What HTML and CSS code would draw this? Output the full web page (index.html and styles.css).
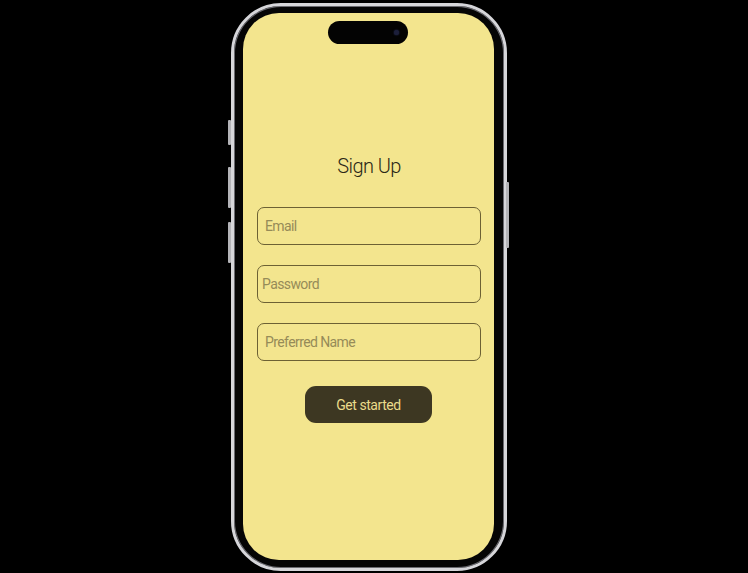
FILE: index.html
```html
<!DOCTYPE html>
<html lang="en">
<head>
<meta charset="utf-8">
<title>Sign Up</title>
<link rel="stylesheet" href="styles.css">
</head>
<body>
<div class="stage">
  <div class="phone">
    <span class="side-btn btn-action"></span>
    <span class="side-btn btn-vol-up"></span>
    <span class="side-btn btn-vol-down"></span>
    <span class="side-btn btn-power"></span>
    <div class="screen">
      <div class="island"><span class="camera"></span></div>
      <h1 class="title">Sign Up</h1>
      <form class="form">
        <input class="field" type="email" placeholder="Email">
        <input class="field field-tight" type="password" placeholder="Password">
        <input class="field" type="text" placeholder="Preferred Name">
        <button class="cta" type="button">Get started</button>
      </form>
    </div>
  </div>
</div>
</body>
</html>
```
FILE: styles.css
```css
html, body {
  margin: 0;
  padding: 0;
  background: #000;
  height: 100%;
}
body {
  font-family: Roboto, "Liberation Sans", Arial, sans-serif;
}
.stage {
  padding: 3px 0 0 231px;
}
.phone {
  position: relative;
  width: 276px;
  height: 568px;
  box-sizing: border-box;
  border: 3px solid #d6d6da;
  border-radius: 50px;
  background: #050505;
  padding: 7px 10px 8px 9px;
  box-shadow: inset 0 0 0 1px #6a6a70;
}
.side-btn {
  position: absolute;
  width: 3px;
  background: #b4b4b8;
  border-radius: 1px;
}
.btn-action { left: -6px; top: 114px; height: 25px; }
.btn-vol-up { left: -6px; top: 161px; height: 41px; }
.btn-vol-down { left: -6px; top: 216px; height: 41px; }
.btn-power { right: -5px; top: 176px; height: 66px; }
.screen {
  position: relative;
  width: 251px;
  height: 547px;
  background: #f3e58e;
  border-radius: 36px;
  box-sizing: border-box;
  padding: 141px 13px 0 14px;
  display: flex;
  flex-direction: column;
  align-items: stretch;
}
.island {
  position: absolute;
  left: 85px;
  top: 8px;
  width: 80px;
  height: 23px;
  border-radius: 12px;
  background: #030303;
}
.camera {
  position: absolute;
  right: 9px;
  top: 9px;
  width: 5px;
  height: 5px;
  border-radius: 50%;
  background: #1c1f3a;
  box-shadow: 0 0 2px #2a2f5a;
}
.title {
  margin: 0;
  text-align: center;
  font-size: 20px;
  line-height: 24px;
  font-weight: 300;
  letter-spacing: -0.6px;
  color: #2b2816;
}
.form {
  margin: 29px 0 0;
  display: flex;
  flex-direction: column;
  gap: 20px;
}
.field {
  display: block;
  width: 100%;
  height: 38px;
  box-sizing: border-box;
  margin: 0;
  border: 1px solid #6c6134;
  border-radius: 7px;
  background: transparent;
  padding: 0 7px;
  font-family: Roboto, "Liberation Sans", Arial, sans-serif;
  font-size: 14px;
  font-weight: 400;
  letter-spacing: -0.6px;
  color: #2b2816;
  outline: none;
}
.field-tight {
  padding-left: 4px;
}
.field::placeholder {
  color: #968b58;
  opacity: 1;
}
.cta {
  align-self: center;
  margin: 5px 0 0 -1px;
  width: 127px;
  height: 37px;
  border: none;
  border-radius: 11px;
  background: #3d3722;
  color: #eadb8b;
  font-family: Roboto, "Liberation Sans", Arial, sans-serif;
  font-size: 14px;
  font-weight: 400;
  letter-spacing: -0.45px;
  cursor: pointer;
}
```
